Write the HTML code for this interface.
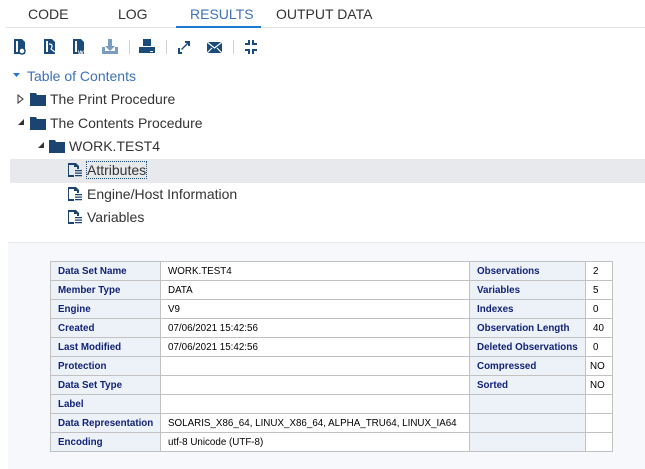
<!DOCTYPE html>
<html><head><style>
*{margin:0;padding:0;box-sizing:border-box}
body{width:645px;height:469px;overflow:hidden;background:#fff;font-family:"Liberation Sans",sans-serif;position:relative;color:#333}
.tab{position:absolute;top:6px;font-size:14px;color:#333}
.a{position:absolute}
.t{position:absolute;font-size:14px;color:#333;white-space:nowrap}
table{position:absolute;left:50px;top:261px;border-collapse:collapse;font-size:9.8px;table-layout:fixed;width:562px}
td{border:1px solid #c1c1c1;height:19px;padding:0 7px;white-space:nowrap;background:#fff;color:#000;overflow:hidden}
td.h{background:#edf2f9;color:#112277;font-weight:bold}
</style></head><body>
<div class="tab" style="left:28px">CODE</div>
<div class="tab" style="left:118px">LOG</div>
<div class="tab" style="left:190px;color:#3d72b8">RESULTS</div>
<div class="tab" style="left:276px">OUTPUT DATA</div>
<div class="a" style="left:6px;top:27px;width:639px;height:1px;background:#e2e2e2"></div>
<div class="a" style="left:176px;top:26px;width:85px;height:2px;background:#1f78d1"></div>

<svg class="a" style="left:0;top:30px" width="300" height="30">
<g fill="#1b4b7a">
<path d="M14 9h8l3 3v12h-11z M16 11v11h2v-11z"/><circle cx="22" cy="21" r="3" fill="#fff" stroke="#1b4b7a" stroke-width="1.5"/>
<path d="M44 9h8l3 3v12h-11z M46 11v11h2v-11z"/><path d="M49 14q5 0 2 5l4 3" stroke="#fff" fill="none" stroke-width="1.2"/>
<path d="M73 9h8l3 3v12h-11z M75 11v11h2v-11z"/><text x="78" y="25" font-size="6" fill="#fff" font-weight="bold" font-family="Liberation Sans">W</text>
<path d="M102 17h3v4h10v-4h3v7h-16z M108 9h4v7h3l-5 5-5-5h3z" fill="#7a9cc0"/>
<rect x="129" y="10" width="1" height="14" fill="#d0d0d0"/>
<path d="M143 9h8v7h-8z M139 17h16v6h-16z"/><rect x="150" y="21" width="3" height="1" fill="#fff"/>
<rect x="166" y="10" width="1" height="14" fill="#d0d0d0"/>
<path d="M178 24v-6h2v4h2v2z M181 19l6-6-2 0v-2h5v5h-2v-2l-6 6z"/>
<path d="M207 12h15v11h-15z" /><path d="M207 12l7.5 6 7.5-6 M207 23l5-5 M222 23l-5-5" stroke="#fff" stroke-width="1.2" fill="none"/>
<rect x="233" y="10" width="1" height="14" fill="#d0d0d0"/>
<path d="M244 9l4 4v-3h2v5h-5v-2h3l-4-4z M258 9l-4 4v-3h-2v5h5v-2h-3l4-4z M244 25l4-4v3h2v-5h-5v2h3l-4 4z M258 25l-4-4v3h-2v-5h5v2h-3l4 4z"/>
</g></svg>

<svg class="a" style="left:13px;top:72px" width="8" height="8"><path d="M0 1h7l-3.5 4z" fill="#1f78d1"/></svg>
<div class="t" style="left:27px;top:68px;color:#3d72b8">Table of Contents</div>

<svg class="a" style="left:17px;top:94px" width="8" height="10"><path d="M1 1l5 4-5 4z" fill="none" stroke="#333"/></svg>
<svg class="a" style="left:30px;top:92px" width="16" height="14"><path d="M0 1h6l1 2h9v11h-16z" fill="#1b4470"/></svg>
<div class="t" style="left:50px;top:91px">The Print Procedure</div>

<svg class="a" style="left:17px;top:118px" width="8" height="8"><path d="M7 1v6h-6z" fill="#333"/></svg>
<svg class="a" style="left:30px;top:116px" width="16" height="14"><path d="M0 1h6l1 2h9v11h-16z" fill="#1b4470"/></svg>
<div class="t" style="left:50px;top:115px">The Contents Procedure</div>

<svg class="a" style="left:37px;top:141px" width="8" height="8"><path d="M7 1v6h-6z" fill="#333"/></svg>
<svg class="a" style="left:49px;top:139px" width="16" height="14"><path d="M0 1h6l1 2h9v11h-16z" fill="#1b4470"/></svg>
<div class="t" style="left:69px;top:138px">WORK.TEST4</div>

<div class="a" style="left:10px;top:159px;width:635px;height:24px;background:#e8e9ec"></div>
<svg class="a" style="left:67px;top:162px" width="16" height="16"><path d="M1 1h8l3 3v3h-2v-2h-3v-2h-5v10h5v2h-6z" fill="#1b4470"/><path d="M8 8h7v1.3h-7zM8 10.5h7v1.3h-7zM8 13h7v1.3h-7z" fill="#1b4470"/></svg>
<div class="t" style="left:87px;top:162px;outline:1px dotted #1b4b7a">Attributes</div>
<svg class="a" style="left:67px;top:186px" width="16" height="16"><path d="M1 1h8l3 3v3h-2v-2h-3v-2h-5v10h5v2h-6z" fill="#1b4470"/><path d="M8 8h7v1.3h-7zM8 10.5h7v1.3h-7zM8 13h7v1.3h-7z" fill="#1b4470"/></svg>
<div class="t" style="left:87px;top:186px">Engine/Host Information</div>
<svg class="a" style="left:67px;top:209px" width="16" height="16"><path d="M1 1h8l3 3v3h-2v-2h-3v-2h-5v10h5v2h-6z" fill="#1b4470"/><path d="M8 8h7v1.3h-7zM8 10.5h7v1.3h-7zM8 13h7v1.3h-7z" fill="#1b4470"/></svg>
<div class="t" style="left:87px;top:209px">Variables</div>

<div class="a" style="left:8px;top:242px;width:637px;height:1px;background:#e6e6e6"></div>
<div class="a" style="left:8px;top:243px;width:637px;height:226px;background:#f6f8fc"></div>

<table>
<colgroup><col style="width:110px"><col style="width:309px"><col style="width:116px"><col style="width:27px"></colgroup>
<tr><td class="h">Data Set Name</td><td>WORK.TEST4</td><td class="h">Observations</td><td>2</td></tr>
<tr><td class="h">Member Type</td><td>DATA</td><td class="h">Variables</td><td>5</td></tr>
<tr><td class="h">Engine</td><td>V9</td><td class="h">Indexes</td><td>0</td></tr>
<tr><td class="h">Created</td><td>07/06/2021 15:42:56</td><td class="h">Observation Length</td><td>40</td></tr>
<tr><td class="h">Last Modified</td><td>07/06/2021 15:42:56</td><td class="h">Deleted Observations</td><td>0</td></tr>
<tr><td class="h">Protection</td><td></td><td class="h">Compressed</td><td style="padding:0 4px">NO</td></tr>
<tr><td class="h">Data Set Type</td><td></td><td class="h">Sorted</td><td style="padding:0 4px">NO</td></tr>
<tr><td class="h">Label</td><td></td><td class="h"></td><td></td></tr>
<tr><td class="h">Data Representation</td><td>SOLARIS_X86_64, LINUX_X86_64, ALPHA_TRU64, LINUX_IA64</td><td class="h"></td><td></td></tr>
<tr><td class="h">Encoding</td><td>utf-8 Unicode (UTF-8)</td><td class="h"></td><td></td></tr>
</table>
</body></html>
